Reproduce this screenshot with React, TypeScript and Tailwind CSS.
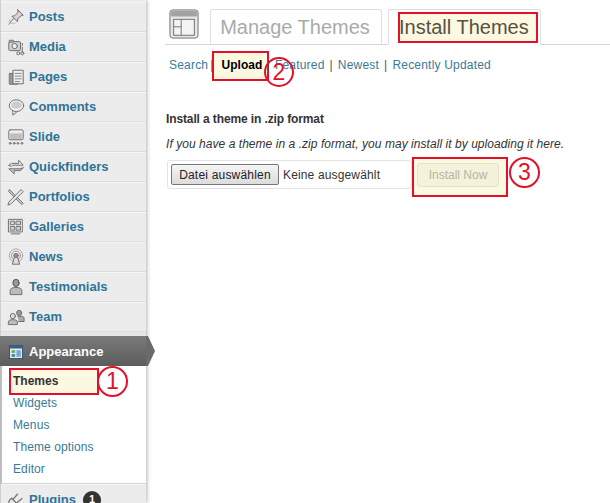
import React from "react";

const S = ({ children }: { children: React.ReactNode }) => (
  <svg width="18" height="18" viewBox="0 0 20 20" fill="#d4d4d4" stroke="#6f6f6f" strokeWidth="1.1" strokeLinejoin="round" strokeLinecap="round" className="shrink-0">
    {children}
  </svg>
);

const icons: Record<string, React.ReactNode> = {
  Posts: <><path d="M12 2l6 6-2.500.7-3.500 3.500-.5 3-6-6 3-.6 3.500-3.500z" /><path d="M7 12l-5 6" /><path d="M3 17h6M3 13v4" stroke="#bbb" /></>,
  Media: <><rect x="2" y="4" width="13" height="10" rx="1.500" /><circle cx="8.500" cy="9" r="3" fill="#eee" /><rect x="3" y="2.500" width="4" height="2" /><path d="M17 6v2M17 10v6" /><circle cx="12.500" cy="17" r="1.700" fill="none" /><circle cx="17" cy="17" r="1.700" fill="none" /></>,
  Pages: <><rect x="3" y="6" width="9" height="12" fill="#999" /><rect x="7" y="2.500" width="11" height="15" fill="#f2f2f2" /><path d="M9 6h7M9 9h7M9 12h7M9 15h5" stroke="#888" /></>,
  Comments: <><path d="M6.500 13.500v5.500l5-4" fill="#f2f2f2" /><ellipse cx="10.500" cy="8.500" rx="8" ry="6.500" fill="#f2f2f2" /><ellipse cx="10.500" cy="8" rx="6" ry="4" fill="#ccc" stroke="none" /></>,
  Slide: <><rect x="2" y="2" width="16" height="11" rx="1.500" fill="#eee" /><rect x="3.500" y="6" width="13" height="6" fill="#bdbdbd" stroke="none" /><circle cx="3.500" cy="17" r="1" fill="none" /><circle cx="8" cy="17" r="1" fill="none" /><circle cx="12" cy="17" r="1" fill="none" /><circle cx="16.500" cy="17" r="1" fill="none" /></>,
  Quickfinders: <><path d="M2 8l3-2h8V2.500l5 5.500H6l-1 1z" fill="#eee" /><path d="M18 11l-3 3H8v3.500L2 12h12z" fill="#c9c9c9" /></>,
  Portfolios: <><path d="M3 2l15 15-1.500 1.500L2 4z" fill="#cfcfcf" /><path d="M16 2l2 2L4 18l-3 1 1-3z" fill="#e8e8e8" /></>,
  Galleries: <><rect x="2" y="1.500" width="15" height="14" fill="#f2f2f2" /><rect x="4" y="3.500" width="4.500" height="4" /><rect x="10.500" y="3.500" width="4.500" height="4" /><rect x="4" y="9.500" width="4.500" height="4" /><rect x="10.500" y="9.500" width="4.500" height="4" /><path d="M5 17.500h9" strokeWidth="1.500" stroke="#999" /></>,
  News: <><circle cx="10" cy="8.500" r="7.500" fill="none" stroke="#aaa" /><circle cx="10" cy="8.500" r="5" fill="none" stroke="#999" /><circle cx="10" cy="8.500" r="2.500" fill="#999" /><path d="M8 11l-2 7h8l-2-7" fill="#ddd" /></>,
  Testimonials: <><ellipse cx="10" cy="5.500" rx="3.500" ry="4" fill="#999" stroke="#555" /><path d="M3.500 18v-4c0-2.500 3-3.500 6.500-3.500s6.500 1 6.500 3.500v4z" fill="#bbb" /></>,
  Team: <><ellipse cx="13.500" cy="5.500" rx="2.800" ry="3" fill="#999" /><path d="M12 9.500c3-1 7-.5 7 2V15h-6" fill="#aaa" /><ellipse cx="6.500" cy="9" rx="2.800" ry="3" fill="#ddd" /><path d="M1.500 18v-2.500c0-2 2.500-2.500 5-2.500s5 .5 5 2.500V18z" fill="#bbb" /></>,
};

const menu = ["Posts", "Media", "Pages", "Comments", "Slide", "Quickfinders", "Portfolios", "Galleries", "News", "Testimonials", "Team"];

const Ring = ({ n, cls }: { n: string; cls: string }) => (
  <div className={`absolute flex items-center justify-center rounded-full border-2 border-[#e4102a] text-[#e4102a] text-[23px] leading-none ${cls}`}>{n}</div>
);
const Sep = ({ cls }: { cls: string }) => <span className={`text-[#555] ${cls}`}>|</span>;

export default function App() {
  return (
    <div className="relative flex w-[610px] h-[503px] overflow-hidden bg-white font-['Liberation_Sans',Arial,sans-serif]">
      <aside className="w-[146px] shrink-0 flex flex-col bg-[#ececec] border-l border-[#cfcfcf] shadow-[1px_0_4px_rgba(0,0,0,0.3)] pt-[2px]">
        {menu.map((m) => (
          <div key={m} className="h-[30px] shrink-0 flex items-center gap-[4px] pl-[6px] border-b border-b-[#dcdcdc] border-t border-t-[#f6f6f6] text-[13px] font-bold text-[#2e7398]">
            <S>{icons[m]}</S>
            <span>{m}</span>
          </div>
        ))}
        <div className="h-[4px] shrink-0 bg-[#e6e6e6]" />
        <div className="relative h-[30px] shrink-0 -ml-px flex items-center gap-[6px] pl-[9px] pt-[1px] bg-gradient-to-b from-[#7a7a7a] to-[#5c5c5c] text-[13px] font-bold text-white">
          <svg width="14" height="14" viewBox="0 0 16 16" className="shrink-0">
            <rect x="0.500" y="0.500" width="15" height="15" fill="#dfe8ef" stroke="#2f4a66" />
            <rect x="1" y="1" width="14" height="3" fill="#37608c" />
            <rect x="3" y="6" width="4" height="3" fill="#6da84a" />
            <rect x="3" y="10.500" width="4" height="3" fill="#3f7fbf" />
            <rect x="8.500" y="6" width="5" height="7.500" fill="#7aa7d0" />
          </svg>
          <span>Appearance</span>
          <svg width="9" height="30" viewBox="0 0 9 30" className="absolute left-full top-0">
            <path d="M0 0h2l7 15-7 15H0z" fill="#6b6b6b" />
          </svg>
        </div>
        <div className="h-[118px] shrink-0 -ml-px bg-white border-l-2 border-[#bdbdbd] border-b border-b-[#d5d5d5] flex flex-col pt-[4px]">
          <div className="h-[22px] shrink-0 flex items-center pl-[7px]">
            <div className="w-[90px] h-[27px] shrink-0 border-2 border-[#e4102a] bg-[#fdf8e2] flex items-center pl-[2px] text-[12px] font-bold text-[#333]">Themes</div>
          </div>
          {["Widgets", "Menus", "Theme options", "Editor"].map((s) => (
            <div key={s} className="h-[22px] shrink-0 flex items-center pl-[11px] text-[12px] tracking-[0.1px] text-[#3a7a96]">
              {s}
            </div>
          ))}
        </div>
        <div className="h-[30px] shrink-0 flex items-center gap-[4px] pl-[6px] text-[13px] font-bold text-[#2e7398] border-t border-t-[#f6f6f6]">
          <svg width="18" height="18" viewBox="0 0 20 20" fill="none" stroke="#777" strokeWidth="1.500" className="shrink-0">
            <path d="M4 16c-3-3-2-6 1-8l6 6c-2 3-4 4-7 2zM7 9l5-6M11 13l6-5M2 19l3-3" />
          </svg>
          <span>Plugins</span>
          <span className="ml-[3px] w-[18px] h-[18px] rounded-full bg-[#333] text-white text-[11px] flex items-center justify-center">1</span>
        </div>
      </aside>

      <main className="flex-1 min-w-0 flex flex-col pl-[19px]">
        <div className="h-[45px] shrink-0 flex items-end border-b border-[#d5d5d5] pl-[4px]">
          <svg width="30" height="30" viewBox="0 0 32 32" className="mb-[5px] shrink-0">
            <rect x="1" y="1" width="30" height="30" rx="3" fill="#e6e6e6" stroke="#6d6d6d" />
            <rect x="2" y="2" width="28" height="6" rx="2" fill="#a2a2a2" />
            <rect x="5" y="11" width="22" height="17" fill="#f4f4f4" stroke="#6d6d6d" />
            <path d="M13 11v17M5 19h8" stroke="#6d6d6d" />
          </svg>
          <div className="ml-[11px] -mb-px h-[36px] w-[172px] shrink-0 flex items-center justify-center pr-[2px] pb-[1px] border border-[#dfdfdf] rounded-t-[3px] text-[20px] text-[#aaa] bg-white border-b-[#d5d5d5]">
            Manage Themes
          </div>
          <div className="ml-[6px] -mb-px h-[36px] w-[153px] shrink-0 flex items-center pl-[9px] border border-[#dfdfdf] rounded-t-[3px] border-b-white">
            <div className="w-[140px] h-[31px] shrink-0 mt-[1px] border-2 border-[#e4102a] bg-[#fdf8e2] flex items-center pb-[1px] text-[20px] text-[#555240]"><span className="-ml-[1px]">Install Themes</span></div>
          </div>
        </div>

        <div className="mt-[12px] h-[16px] flex items-center pl-[4px] text-[12px] tracking-[0.2px] text-[#3a7a96] whitespace-pre">
          <span>Search</span>
          <Sep cls="ml-[2px]" />
          <div className="-ml-[2px] mt-[2px] w-[57px] h-[30px] shrink-0 border-2 border-[#e4102a] bg-[#fdf8e2] flex items-center pl-[8px] pb-[2px] font-bold tracking-normal text-black">Upload</div>
          <Sep cls="-ml-[2px]" />
          <span className="ml-[5px]">Featured</span>
          <Sep cls="mx-[5px]" />
          <span>Newest</span>
          <Sep cls="mx-[5px]" />
          <span>Recently Updated</span>
        </div>

        <h4 className="mt-[38px] pl-[1px] text-[12px] tracking-[-0.01em] font-bold text-[#333] leading-[16px] whitespace-nowrap">Install a theme in .zip format</h4>
        <p className="mt-[9px] pl-[1px] text-[12px] tracking-[0.05px] italic text-[#333] leading-[16px] whitespace-nowrap">If you have a theme in a .zip format, you may install it by uploading it here.</p>
        <div className="mt-[8px] ml-[2px] w-[245px] h-[29px] flex items-center border border-[#e4e4e4] rounded-[3px] pl-[3px]">
          <button className="h-[21px] w-[108px] shrink-0 border border-[#777] rounded-[2px] bg-gradient-to-b from-[#f5f5f5] to-[#dcdcdc] text-[12px] tracking-[0.2px] text-[#222]">Datei auswählen</button>
          <span className="ml-[4px] text-[12px] tracking-[0.15px] text-[#333] whitespace-nowrap">Keine ausgewählt</span>
        </div>
      </main>

      <Ring n="1" cls="left-[97px] top-[366px] w-[31px] h-[31px] bg-white" />
      <Ring n="2" cls="left-[264px] top-[57px] w-[30px] h-[30px]" />

      <div className="absolute left-[412px] top-[157px] w-[96px] h-[40px] bg-[#fdf8e2] border-2 border-[#e4102a] pl-[3px] pt-[4px]">
        <div className="w-[82px] h-[24px] border border-[#e6e2c8] rounded-[3px] bg-[#f5f2dc] flex items-center justify-center text-[12px] text-[#b5b4a4]">Install Now</div>
      </div>
      <Ring n="3" cls="left-[509px] top-[157px] w-[31px] h-[31px]" />
    </div>
  );
}
